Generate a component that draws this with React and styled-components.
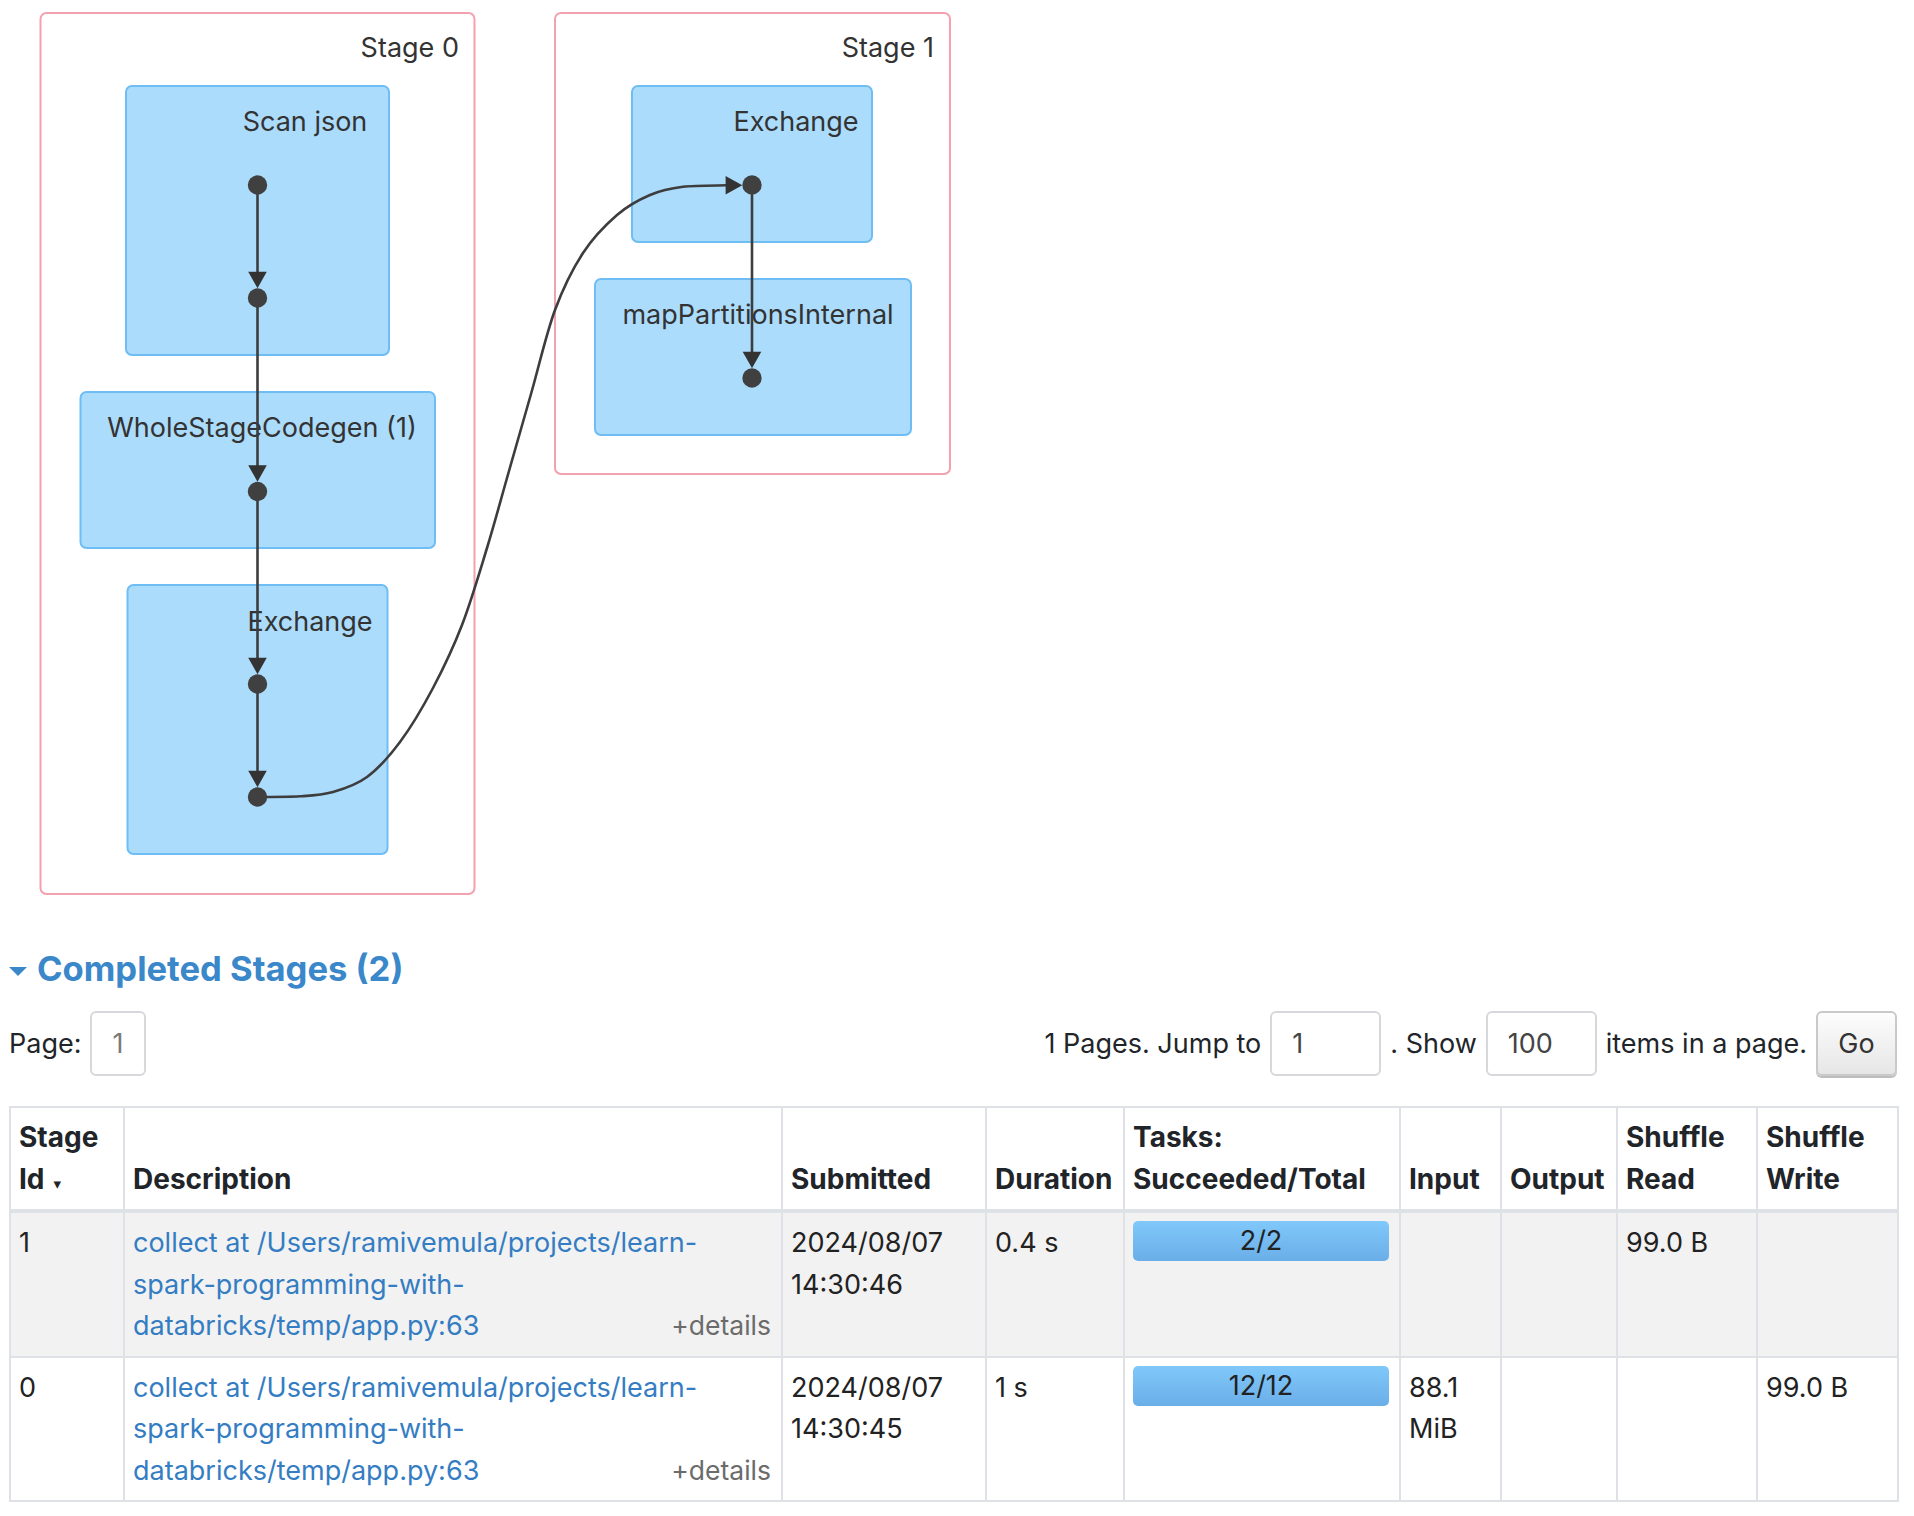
import styled, { createGlobalStyle } from "styled-components";

const GlobalStyle = createGlobalStyle`
  body {
    margin: 0;
    background: #ffffff;
    font-family: Inter, "Liberation Sans", sans-serif;
    color: #212529;
  }
`;

// ---- DAG ----
const DagCanvas = styled.svg`
  display: block;
  width: 970px;
  height: 920px;
`;

const StageBox = styled.rect`
  fill: #ffffff;
  stroke: #f3a1af;
  stroke-width: 2px;
`;

const OpBox = styled.rect`
  fill: #acdcfc;
  stroke: #6ebdf4;
  stroke-width: 2px;
`;

const DagLabel = styled.text`
  font-family: Inter, "Liberation Sans", sans-serif;
  font-size: 27px;
  fill: #333333;
`;

const Edge = styled.path`
  fill: none;
  stroke: #3d3d3d;
  stroke-width: 2.6px;
`;

const Dot = styled.circle`
  fill: #404040;
`;

const Arrow = styled.polygon`
  fill: #333333;
`;

const stagesDag = [
  { label: "Stage 0", x: 40.5, y: 13, w: 434, h: 881, labelX: 459 },
  { label: "Stage 1", x: 555, y: 13, w: 395, h: 461, labelX: 934 },
];

const ops = [
  { label: "Scan json", x: 126, y: 86, w: 263, h: 269, lx: 305, ly: 131 },
  { label: "WholeStageCodegen (1)", x: 80.5, y: 392, w: 354.5, h: 156, lx: 262, ly: 437 },
  { label: "Exchange", x: 127.5, y: 585, w: 260, h: 269, lx: 310, ly: 631 },
  { label: "Exchange", x: 632, y: 86, w: 240, h: 156, lx: 796, ly: 131 },
  { label: "mapPartitionsInternal", x: 595, y: 279, w: 316, h: 156, lx: 758, ly: 324 },
];

const R = 9.7;
const dots = [
  [257.5, 185],
  [257.5, 298],
  [257.5, 491.5],
  [257.5, 684],
  [257.5, 797],
  [752, 185],
  [752, 378],
];

const downEdges = [
  [0, 1],
  [1, 2],
  [2, 3],
  [3, 4],
  [5, 6],
];

const crossPoints = [
  [257.5, 797], [300, 796.3], [333, 792], [367, 777], [400, 742], [433, 688],
  [462, 625], [487, 548], [507, 478], [531, 394], [555, 310], [583, 253],
  [617, 215], [650, 195], [683, 186.8], [727, 185.3],
];

function smoothPath(pts) {
  const f = (p) => `${p[0].toFixed(1)},${p[1].toFixed(1)}`;
  let d = `M${f(pts[0])}`;
  for (let i = 0; i < pts.length - 1; i++) {
    const p0 = pts[i - 1] || pts[i];
    const p1 = pts[i];
    const p2 = pts[i + 1];
    const p3 = pts[i + 2] || p2;
    const c1 = [p1[0] + (p2[0] - p0[0]) / 6, p1[1] + (p2[1] - p0[1]) / 6];
    const c2 = [p2[0] - (p3[0] - p1[0]) / 6, p2[1] - (p3[1] - p1[1]) / 6];
    d += ` C${f(c1)} ${f(c2)} ${f(p2)}`;
  }
  return d;
}

const DagViz = () => (
  <DagCanvas viewBox="0 0 970 920">
    {stagesDag.map((s) => (
      <g key={s.label}>
        <StageBox x={s.x} y={s.y} width={s.w} height={s.h} rx="6" />
        <DagLabel x={s.labelX} y="57" textAnchor="end">
          {s.label}
        </DagLabel>
      </g>
    ))}
    {ops.map((o, i) => (
      <g key={i}>
        <OpBox x={o.x} y={o.y} width={o.w} height={o.h} rx="6" />
        <DagLabel x={o.lx} y={o.ly} textAnchor="middle">
          {o.label}
        </DagLabel>
      </g>
    ))}
    {downEdges.map(([a, b]) => {
      const [x, y1] = dots[a];
      const y2 = dots[b][1] - R;
      return (
        <g key={`${a}-${b}`}>
          <Edge d={`M${x},${y1} L${x},${y2 - 8}`} />
          <Arrow points={`${x - 9.3},${y2 - 16.6} ${x + 9.3},${y2 - 16.6} ${x},${y2}`} />
        </g>
      );
    })}
    <Edge d={smoothPath(crossPoints)} />
    <Arrow points="725.6,176 725.6,194.6 742.3,185.3" />
    {dots.map(([x, y], i) => (
      <Dot key={i} cx={x} cy={y} r={R} />
    ))}
  </DagCanvas>
);

// ---- Completed stages ----
const Section = styled.div`
  width: 1888px;
  padding: 0 9px;
`;

const SectionTitle = styled.h4`
  display: flex;
  align-items: center;
  gap: 10px;
  margin: 28px 0 0;
  font-size: 34.6px;
  line-height: 41px;
  font-weight: 700;
  color: #3a87ca;
`;

const Caret = styled.span`
  width: 0;
  height: 0;
  border-left: 9px solid transparent;
  border-right: 9px solid transparent;
  border-top: 9px solid #3a87ca;
  margin-top: 6px;
`;

const PagingBar = styled.div`
  display: flex;
  justify-content: space-between;
  align-items: center;
  margin-top: 22px;
  font-size: 27px;
  line-height: 41.5px;
`;

const PagingGroup = styled.div`
  display: flex;
  align-items: center;
  gap: 9px;
`;

const PageBox = styled.span`
  box-sizing: border-box;
  width: ${(p) => p.$w}px;
  height: 65px;
  padding-left: 20px;
  display: flex;
  align-items: center;
  border: 2px solid #d6d8db;
  border-radius: 6px;
  color: ${(p) => (p.$muted ? "#7a7a7a" : "#444444")};
  background: #ffffff;
`;

const GoButton = styled.button`
  box-sizing: border-box;
  width: 81px;
  height: 65px;
  border: 2px solid #c9c9c9;
  border-radius: 6px;
  background: linear-gradient(#fdfdfd, #e6e6e6);
  box-shadow: 0 2px 0 #bdbdbd;
  font-family: inherit;
  font-size: 27px;
  color: #333333;
  padding: 0;
`;

const StagesTable = styled.table`
  margin-top: 30px;
  width: 1888px;
  table-layout: fixed;
  border-collapse: collapse;
  font-size: 27px;
  line-height: 41.5px;
`;

const HeadCell = styled.th`
  border: 2px solid #dee2e6;
  border-bottom-width: 4px;
  padding: 9px 10px 9px 8px;
  text-align: left;
  vertical-align: bottom;
  font-size: 28px;
  font-weight: 700;
  color: #212529;
`;

const SortArrow = styled.span`
  font-family: "DejaVu Sans", sans-serif;
  font-size: 15px;
  line-height: 1;
  margin-left: 9px;
`;

const Row = styled.tr`
  background: ${(p) => (p.$striped ? "#f2f2f2" : "#ffffff")};
`;

const Cell = styled.td`
  border: 2px solid #dee2e6;
  padding: 9px 10px 9px 8px;
  vertical-align: top;
  color: #222222;
`;

const ProgressCell = styled(Cell)`
  padding-top: 8px;
`;

const DescLink = styled.a`
  color: #347dc3;
  text-decoration: none;
`;

const Details = styled.span`
  float: right;
  font-size: 26.5px;
  color: #6b6b6b;
`;

const Progress = styled.div`
  position: relative;
  height: 40px;
  border-radius: 5px;
  background: #e9ecef;
  overflow: hidden;
`;

const ProgressFill = styled.div`
  height: 100%;
  background: linear-gradient(#80c8fa, #6aaee8);
`;

const ProgressText = styled.span`
  position: absolute;
  inset: 0;
  text-align: center;
  line-height: 40px;
  color: #222222;
`;

const columns = [
  { key: "id", w: 114 },
  { key: "desc", w: 658, title: "Description" },
  { key: "submitted", w: 204, title: "Submitted" },
  { key: "duration", w: 138, title: "Duration" },
  { key: "tasks", w: 276, title: "Tasks: Succeeded/Total" },
  { key: "input", w: 101, title: "Input" },
  { key: "output", w: 116, title: "Output" },
  { key: "read", w: 140, title: "Shuffle Read" },
  { key: "write", w: 141, title: "Shuffle Write" },
];

const stages = [
  {
    id: 1,
    desc: "collect at /Users/ramivemula/projects/learn-spark-programming-with-databricks/temp/app.py:63",
    submitted: "2024/08/07 14:30:46",
    duration: "0.4 s",
    succeeded: 2,
    total: 2,
    input: "",
    output: "",
    read: "99.0 B",
    write: "",
  },
  {
    id: 0,
    desc: "collect at /Users/ramivemula/projects/learn-spark-programming-with-databricks/temp/app.py:63",
    submitted: "2024/08/07 14:30:45",
    duration: "1 s",
    succeeded: 12,
    total: 12,
    input: "88.1 MiB",
    output: "",
    read: "",
    write: "99.0 B",
  },
];

const CompletedStages = () => (
  <Section>
    <SectionTitle>
      <Caret />
      Completed Stages (2)
    </SectionTitle>
    <PagingBar>
      <PagingGroup>
        Page:
        <PageBox $w={56} $muted>
          1
        </PageBox>
      </PagingGroup>
      <PagingGroup>
        1 Pages. Jump to
        <PageBox $w={111}>1</PageBox>
        . Show
        <PageBox $w={111}>100</PageBox>
        items in a page.
        <GoButton>Go</GoButton>
      </PagingGroup>
    </PagingBar>
    <StagesTable>
      <colgroup>
        {columns.map((c) => (
          <col key={c.key} style={{ width: c.w }} />
        ))}
      </colgroup>
      <thead>
        <tr>
          <HeadCell>
            Stage Id<SortArrow>▾</SortArrow>
          </HeadCell>
          {columns.slice(1).map((c) => (
            <HeadCell key={c.key}>{c.title}</HeadCell>
          ))}
        </tr>
      </thead>
      <tbody>
        {stages.map((s, i) => (
          <Row key={s.id} $striped={i % 2 === 0}>
            <Cell>{s.id}</Cell>
            <Cell>
              <DescLink href="#">{s.desc}</DescLink>
              <Details>+details</Details>
            </Cell>
            <Cell>{s.submitted}</Cell>
            <Cell>{s.duration}</Cell>
            <ProgressCell>
              <Progress>
                <ProgressFill style={{ width: `${(s.succeeded / s.total) * 100}%` }} />
                <ProgressText>
                  {s.succeeded}/{s.total}
                </ProgressText>
              </Progress>
            </ProgressCell>
            <Cell>{s.input}</Cell>
            <Cell>{s.output}</Cell>
            <Cell>{s.read}</Cell>
            <Cell>{s.write}</Cell>
          </Row>
        ))}
      </tbody>
    </StagesTable>
  </Section>
);

export default function App() {
  return (
    <>
      <GlobalStyle />
      <DagViz />
      <CompletedStages />
    </>
  );
}
